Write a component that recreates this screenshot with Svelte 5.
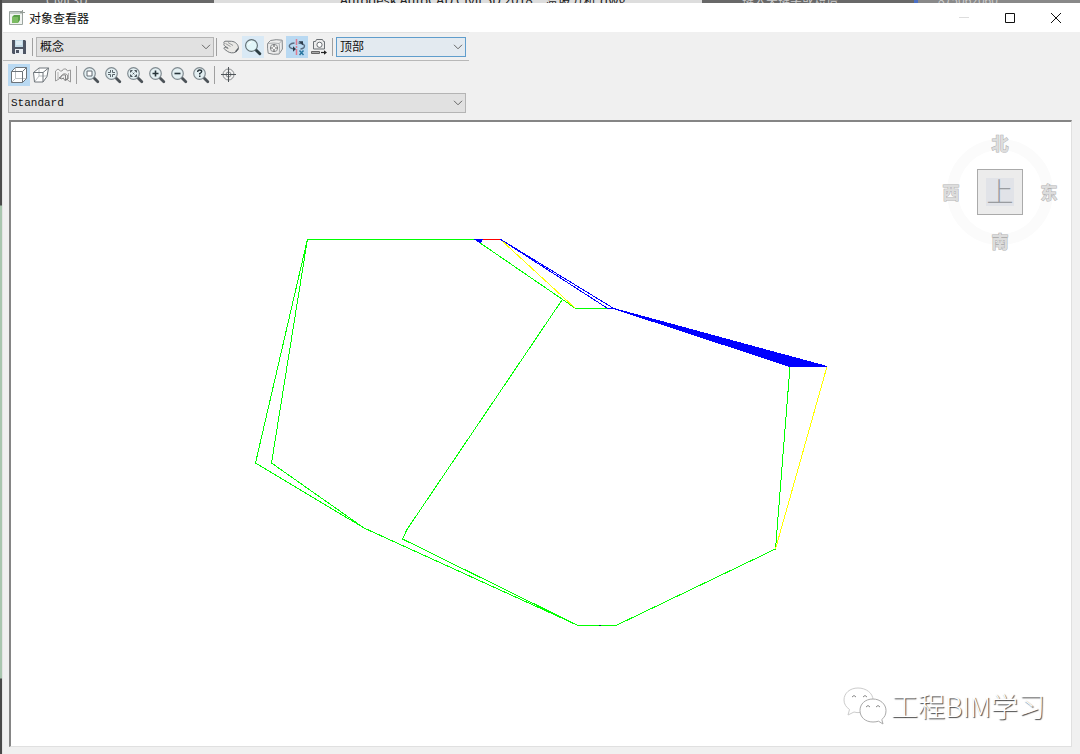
<script lang="ts">
  type Tool = { id: string; label: string };

  const viewTools: Tool[] = [
    { id: 'pan', label: '平移' },
    { id: 'zoom', label: '缩放' },
    { id: 'orbit', label: '三维动态观察' },
    { id: 'axis', label: '绕 X 轴旋转' },
    { id: 'camera', label: '设置视图' }
  ];

  const projectionTools: Tool[] = [
    { id: 'parallel', label: '平行' },
    { id: 'perspective', label: '透视' },
    { id: 'reset', label: '重置视图' }
  ];

  const zoomTools: Tool[] = [
    { id: 'window', label: '窗口缩放' },
    { id: 'center', label: '中心缩放' },
    { id: 'extents', label: '范围缩放' },
    { id: 'in', label: '放大' },
    { id: 'out', label: '缩小' },
    { id: 'help', label: '缩放选项' }
  ];

  let activeView = $state('axis');
  let projection = $state('parallel');
  let visualStyle = $state('概念');
  let direction = $state('顶部');
  let displayConfig = $state('Standard');
</script>

{#snippet chevron()}
  <svg class="chevron" width="10" height="6" viewBox="0 0 10 6" aria-hidden="true">
    <path d="M1 0.8 5 4.8 9 0.8" fill="none" stroke="#666" />
  </svg>
{/snippet}

{#snippet lens()}
  <path d="M11 11 14.8 14.8" stroke="#4c5358" stroke-width="2.8" stroke-linecap="round" />
  <circle cx="6.5" cy="6.5" r="5.8" fill="#e3eff2" stroke="#808b91" stroke-width="1.2" />
{/snippet}

{#snippet icon(id: string)}
  <svg class="icon" width="16" height="16" viewBox="0 0 16 16" fill="none" aria-hidden="true">
    {#if id === 'save'}
      <path d="M1 1h13l1 1v13H2l-1-1z" fill="#4e5564" />
      <path d="M4 1h8v7H4z" fill="#c3dbe8" />
      <path d="M5 3h6M5 5h6" stroke="#f8fbfd" />
      <path d="M4 10h8v5H4z" fill="#e8edf2" />
      <path d="M5 11h3v3H5z" fill="#4e5564" />
    {:else if id === 'pan'}
      <path
        d="M1.2 4.8C.2 3.2 1.4 2 3 2.2L8.5 2.300C12.500 2.600 15.300 5.400 15.500 9.200L12.800 13C10.500 14.400 6.500 14 4.500 12.400L1.500 10.200C.3 9 1.300 8 2.800 8.500L5.200 9.300 1.800 7C.8 6 .6 5.300 1.200 4.800z"
        fill="#e9e8e5"
        stroke="#75797c"
      />
      <path d="M2.500 4.500 7.500 7.500M5 3.500 10 6.500" stroke="#8e9294" stroke-width="0.900" />
      <path d="M12.500 12.800 15.400 9.500" stroke="#555b60" stroke-width="1.300" />
    {:else if id === 'zoom'}
      <path d="M11 11 14.800 14.800" stroke="#2c3d42" stroke-width="2.900" stroke-linecap="round" />
      <circle cx="6.500" cy="6.500" r="5.900" fill="#e1f5f8" stroke="#5d6b70" stroke-width="1.100" />
      <path d="M3.500 6a3.500 3.500 0 0 1 3-2.800" stroke="#fff" />
    {:else if id === 'orbit'}
      <path
        d="M.6 4.500 3.500 1.500Q9 0 15.200 1.200l.2 8.800-3.200 5Q6 16 1.200 14.200Q.2 9 .6 4.500z"
        fill="#ededed"
        stroke="#85898c"
      />
      <path d="M.6 4.500Q7 3.500 12.200 4.500Q13 10 12.200 15M12.200 4.500l3-3.300" stroke="#a4a7a9" stroke-width="0.900" />
      <circle cx="7" cy="9" r="3.700" fill="#f4f4f4" stroke="#8a8e90" />
      <path d="M7 5.500v2.500M7 10v2.500M3.500 9H6M8 9h2.500" stroke="#666" stroke-width="1.200" />
    {:else if id === 'axis'}
      <path d="M7.500 0v16" stroke="#dc7b90" stroke-width="1.500" stroke-dasharray="6 1 2 1" />
      <path
        d="M5.500 4C1 4.300-.8 6.500 1 8.500c.8.800 2 1.300 3.500 1.400M9.500 4c5 .2 7 2.500 5.500 4.500-.8 1-2 1.400-3.500 1.500"
        stroke="#586b80"
        stroke-width="1.400"
      />
      <path d="M9.500 2.200h4.500v4zM4 7.300 7 10 4 12.700z" fill="#2c3b4c" />
      <path d="M10.500 11.500 14.500 16M14.500 11.500l-4 4.500" stroke="#28759f" stroke-width="1.500" />
    {:else if id === 'camera'}
      <path d="M2.500 2.500h2l1-2h6l1 2h1v7.500h-11z" fill="#ececec" stroke="#6b7074" />
      <circle cx="8.500" cy="5.800" r="2.600" fill="#fff" stroke="#6b7074" />
      <path d="M.5 12.500h8v2h-8z" fill="#aaa" stroke="#666" />
      <path d="M10 13.500h4" stroke="#222" stroke-width="1.200" />
      <path d="m13 11.200 3 2.300-3 2.300z" fill="#222" />
    {:else if id === 'parallel'}
      <path d="M.5 4.500l4-4h11v11l-4 4H.5z" fill="#fff" />
      <path d="M4.500.5v11h11M.5 15.500l4-4" stroke="#b4babd" stroke-width="0.900" />
      <path d="M.5 4.500h11v11H.5zM.5 4.500l4-4h11l-4 4M15.500.5v11l-4 4" stroke="#6c7379" />
    {:else if id === 'perspective'}
      <path d="M.5 5.500 6 1h9.500L14 9.500 10 15H1.500z" fill="#fff" />
      <path d="M6 1v8h8M1.500 15 6 9" stroke="#b4babd" stroke-width="0.900" />
      <path d="M.5 5.500H10V15H1.500zM.5 5.500 6 1h9.500L10 5.500M15.500 1 14 9.500 10 15" stroke="#70777c" />
    {:else if id === 'reset'}
      <path
        d="M.5 14V4L3 2l2.500 2H7l1.500-2H11l1.500 2 3-1V15L12.500 13V8Q9 5 6 9l-2 3z"
        fill="#f4f4f4"
        stroke="#999"
      />
      <path d="M3 5v7M13.500 6v6" stroke="#b5b5b5" />
      <path d="M5.500 11a4 4 0 0 1 5-3v5M8 11l2.500 3 2-3M4 10l2 2 3-1" stroke="#858585" />
    {:else if id === 'window'}
      {@render lens()}
      <path d="M4 4h5v5H4z" fill="#fff" stroke="#626b72" />
    {:else if id === 'center'}
      {@render lens()}
      <path d="M5.500 3v2.500H3M7.500 3v2.500H10M5.500 10V7.500H3M7.500 10V7.500H10" stroke="#5a666c" />
    {:else if id === 'extents'}
      {@render lens()}
      <path d="m4 4 5 5M9 4 4 9" stroke="#7d878c" stroke-dasharray="2 3" />
      <path d="M3.500 5.500v-2h2M7.500 3.500h2v2M9.500 7.500v2h-2M5.500 9.500h-2v-2" stroke="#485359" />
      <path d="M6 6h1v1H6z" fill="#485359" />
    {:else if id === 'in'}
      {@render lens()}
      <path d="M3.500 6.500h6M6.500 3.500v6" stroke="#27343a" stroke-width="1.600" />
    {:else if id === 'out'}
      {@render lens()}
      <path d="M3.500 6.500h6" stroke="#27343a" stroke-width="1.600" />
    {:else if id === 'help'}
      {@render lens()}
      <path d="M4.700 5q0-2 2-2t2 1.600q0 1-2 2v1" stroke="#27343a" stroke-width="1.400" />
      <path d="M6 8.600h1.500V10H6z" fill="#27343a" />
    {:else if id === 'target'}
      <circle cx="7.500" cy="7.500" r="5.500" stroke="#85898c" />
      <circle cx="7.500" cy="7.500" r="2.500" stroke="#85898c" />
      <path d="M7.500 0v15M0 7.500h15" stroke="#4e5458" />
    {/if}
  </svg>
{/snippet}

{#snippet tool(item: Tool, pressed: boolean, pick: () => void)}
  <button
    type="button"
    class="tool"
    class:pressed
    class:hot={item.id === 'zoom'}
    aria-label={item.label}
    title={item.label}
    onclick={pick}
  >
    {@render icon(item.id)}
  </button>
{/snippet}

<div class="desktop">
  <!-- sliver of the CAD application showing above the dialog -->
  <div class="host-top" aria-hidden="true">
    <span class="host-tab">Civil 3D</span>
    <span class="host-title">Autodesk AutoCAD Civil 3D 2018 &nbsp;&nbsp; 溜坡分析.dwg</span>
    <span class="host-search">键入关键字或短语</span>
    <span class="host-user">875062060</span>
  </div>

  <main class="window">
    <header class="titlebar">
      <svg class="app-icon" width="16" height="16" viewBox="0 0 16 16" aria-hidden="true">
        <path d="M.5 1.500h13v13H.5z" fill="#f1f4f1" stroke="#9ba49f" />
        <path d="M1 2h12v2H1z" fill="#c5cdc8" />
        <path d="m3 7 2-2h6v5l-2 3H3z" fill="#5b9f49" />
        <path d="M3 7h6v6H3z" fill="#7cbb62" />
        <path d="M13.500 0v5M11 2.500h5" stroke="#959d97" />
      </svg>
      <h1>对象查看器</h1>
      <div class="controls">
        <button type="button" aria-label="最小化" disabled>
          <svg width="10" height="10" viewBox="0 0 10 10"><path d="M0 4.500h10" stroke="#ddd" /></svg>
        </button>
        <button type="button" aria-label="最大化">
          <svg width="10" height="10" viewBox="0 0 10 10">
            <path d="M.5.5h9v9h-9z" fill="none" stroke="#111" />
          </svg>
        </button>
        <button type="button" aria-label="关闭">
          <svg width="10" height="10" viewBox="0 0 10 10">
            <path d="m0 0 10 10M10 0 0 10" stroke="#111" />
          </svg>
        </button>
      </div>
    </header>

    <div class="toolbar first">
      <button type="button" class="tool" aria-label="保存" title="保存">{@render icon('save')}</button>
      <span class="divider"></span>
      <div class="picker style-picker">
        <select aria-label="视觉样式" bind:value={visualStyle}>
          <option>概念</option>
          <option>线框</option>
          <option>真实</option>
        </select>
        {@render chevron()}
      </div>
      <span class="divider"></span>
      {#each viewTools as item (item.id)}
        {@render tool(item, activeView === item.id, () => (activeView = item.id))}
      {/each}
      <span class="divider"></span>
      <div class="picker direction-picker">
        <select aria-label="视图方向" bind:value={direction}>
          <option>顶部</option>
          <option>底部</option>
          <option>左</option>
          <option>右</option>
        </select>
        {@render chevron()}
      </div>
    </div>

    <div class="toolbar">
      {#each projectionTools as item (item.id)}
        {@render tool(item, projection === item.id, () => (projection = item.id))}
      {/each}
      <span class="divider"></span>
      {#each zoomTools as item (item.id)}
        {@render tool(item, false, () => {})}
      {/each}
      <span class="divider"></span>
      <button type="button" class="tool" aria-label="目标点" title="目标点">{@render icon('target')}</button>
    </div>

    <div class="picker config-picker">
      <select aria-label="显示配置" bind:value={displayConfig}>
        <option>Standard</option>
      </select>
      {@render chevron()}
    </div>

    <section class="viewport" aria-label="模型视图">
      <svg class="model" viewBox="11 123 1060 623" fill="none" role="img" aria-label="曲面边界">
        <g shape-rendering="crispEdges">
          <g stroke="#0f0">
            <path d="M474 239.500H307.500L255.500 463.500 364 528.500 577 625.500H617L775.500 549.500 790 367" />
            <path d="M307.500 239.500 271.500 463.500 364 528.500" />
            <path d="M577 625.500 402.500 539.500 407 530 562 300.500" />
            <path d="M478 242 575 308.500H609" />
          </g>
          <path d="M500 239.500 575 308.500M827 367 775.500 549.500" stroke="#ff0" />
          <path d="M483 239.500H500" stroke="#f00" />
          <path d="M500 239.500 607 308.500H613L500 239.500" stroke="#00f" />
          <path d="M473 239H484L480 244z" fill="#00f" />
          <path d="M612 308.500 827 367H790z" fill="#00f" stroke="#00f" />
          <path d="M599 625.500h2" stroke="#044" />
        </g>
      </svg>

      <div class="compass">
        <span class="north">北</span>
        <span class="west">西</span>
        <button type="button" class="cube"><span>上</span></button>
        <span class="east">东</span>
        <span class="south">南</span>
      </div>

      <div class="watermark">
        <svg width="44" height="38" viewBox="0 0 44 38" fill="#fff" stroke="#aaa" aria-hidden="true">
          <path d="M15 1C7 1 1 6 1 13c0 4 2 7 5.500 9.500L5 28l6-3c2 .6 4 .8 6 .5C25 25 30 20 30 13S23 1 15 1z" stroke="#ccc" />
          <path
            d="M30 12c-8 0-13 5-13 11.500S22 35 30 35c2 0 4-.3 5.500-.8L40 37l-1.200-4.500C42 30 43 27 43 23.500 43 17 37 12 30 12z"
          />
          <path d="M9 10q2-3 4 0M20 10q2-3 4 0M23 20q2-3 4 0M33 20q2-3 4 0" fill="none" stroke="#888" />
        </svg>
        <span>工程BIM学习</span>
      </div>
    </section>
  </main>
</div>

<style>
  :global(body) {
    margin: 0;
  }

  .desktop {
    box-sizing: border-box;
    min-height: 100vh;
    display: flex;
    flex-direction: column;
    padding-left: 2px;
    background: linear-gradient(#4b4b4b 205px, #a9c6af 206px, #a9c6af calc(100% - 76px), #484848 calc(100% - 75px));
    font-family: 'Noto Sans CJK SC', sans-serif;
    font-size: 12px;
    color: #111;
  }

  .host-top {
    height: 3px;
    display: grid;
    grid-template-columns: 212px 488px 212px 1fr;
    overflow: hidden;
    background: #686868;
    color: #ccc;
    white-space: nowrap;
  }

  .host-top span {
    overflow: hidden;
    line-height: 0;
  }

  .host-top .host-tab {
    padding-left: 44px;
  }

  .host-top .host-title {
    padding-left: 126px;
    background: #ddd;
    color: #222;
    font-size: 13px;
  }

  .host-top .host-search {
    padding-left: 40px;
  }

  .host-top .host-user {
    padding-left: 20px;
    border-left: 4px solid #4b70c5;
    background: #898989;
  }

  .window {
    flex: 1;
    display: flex;
    flex-direction: column;
    background: #f0f0f0;
    border-left: 1px solid #e4e4e4;
  }

  .titlebar {
    height: 29px;
    display: flex;
    align-items: center;
    padding: 0 1px 0 6px;
    background: #fff;
  }

  h1 {
    margin: 0 auto 0 4px;
    font-size: 12px;
    font-weight: 400;
    line-height: 16px;
  }

  .controls {
    display: flex;
  }

  .controls button {
    width: 46px;
    height: 28px;
    padding: 0;
    border: 0;
    background: transparent;
  }

  .controls svg {
    display: block;
    margin: 0 auto;
  }

  .toolbar {
    width: 461px;
    height: 28px;
    display: flex;
    align-items: center;
    padding-left: 5px;
  }

  .toolbar.first {
    height: 27px;
    border-top: 1px solid #e2e2e2;
    border-bottom: 1px solid #b8b8b8;
  }

  .tool {
    flex: none;
    width: 22px;
    height: 22px;
    display: grid;
    place-items: center;
    padding: 0;
    border: 0;
    background: transparent;
  }

  .tool.hot {
    background: #d9e9f5;
  }

  .tool.pressed {
    background: #b9d9f2;
  }

  .icon {
    display: block;
    overflow: visible;
  }

  .divider {
    flex: none;
    width: 1px;
    height: 18px;
    margin: 0 3px 0 2px;
    background: #a0a0a0;
  }

  .picker {
    flex: none;
    display: grid;
    align-items: center;
    height: 20px;
  }

  .picker select,
  .chevron {
    grid-area: 1 / 1;
  }

  .picker select {
    appearance: none;
    box-sizing: border-box;
    width: 100%;
    height: 20px;
    padding: 0 20px 2px 3px;
    border: 1px solid #b4b4b4;
    border-radius: 0;
    background: #e1e1e1;
    color: #111;
    font-family: inherit;
    font-size: 12px;
    line-height: 16px;
  }

  .chevron {
    justify-self: end;
    margin-right: 3px;
    pointer-events: none;
  }

  .style-picker {
    width: 178px;
  }

  .direction-picker {
    width: 130px;
  }

  .direction-picker select {
    border-color: #5f9dcc;
    background: #e3eaf0;
  }

  .config-picker {
    width: 458px;
    margin: 4px 0 7px 5px;
  }

  .config-picker select {
    padding: 0 20px 0 2px;
    font-family: 'Liberation Mono', monospace;
    font-size: 11px;
  }

  .viewport {
    position: relative;
    flex: 1;
    display: flex;
    margin: 0 8px 7px 6px;
    border: 1px solid #e0e0e0;
    border-top: 2px solid #858585;
    border-left: 2px solid #858585;
    background: #fff;
  }

  .model {
    width: 100%;
    min-width: 0;
  }

  .compass {
    position: absolute;
    top: 10px;
    right: 9px;
    display: grid;
    grid-template-columns: 26px 72px 26px;
    grid-template-rows: 22px 76px 22px;
    place-items: center;
    font-size: 17px;
    line-height: 22px;
  }

  .compass::before {
    content: '';
    grid-area: 1 / 1 / 4 / 4;
    width: 84px;
    height: 84px;
    border: 11px solid #fbfbfb;
    border-radius: 50%;
  }

  .compass > span {
    color: #ddd;
    font-weight: 700;
    -webkit-text-stroke: 1px #b0b0b0;
    paint-order: stroke fill;
  }

  .north {
    grid-area: 1 / 2;
  }

  .west {
    grid-area: 2 / 1;
  }

  .east {
    grid-area: 2 / 3;
  }

  .south {
    grid-area: 3 / 2;
  }

  .cube {
    grid-area: 2 / 2;
    width: 46px;
    height: 46px;
    display: grid;
    place-items: center;
    padding: 0;
    border: 1px solid #aaa;
    background: #ececec;
    color: #999ca0;
    font-family: 'Noto Sans CJK SC', sans-serif;
    font-size: 27px;
  }

  .cube span {
    width: 28px;
    height: 28px;
    background: #e1e3e8;
    font-weight: 300;
    line-height: 26px;
  }

  .watermark {
    position: absolute;
    right: 26px;
    bottom: 21px;
    display: flex;
    align-items: center;
    gap: 4px;
    color: #fff;
    font-size: 27px;
    font-weight: 300;
    line-height: 38px;
    text-shadow: 1px 1px 1px #444;
  }
</style>
